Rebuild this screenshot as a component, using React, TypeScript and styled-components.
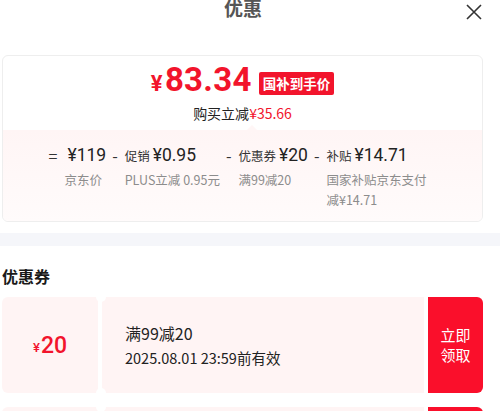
import React from "react";
import styled, { createGlobalStyle } from "styled-components";

const RED = "#f2142c";

const GlobalStyle = createGlobalStyle`
  body {
    margin: 0;
    background: #fff;
    font-family: "Noto Sans CJK SC", "Noto Sans", sans-serif;
    color: #1a1a1a;
  }
`;

const Page = styled.div`
  width: 500px;
  height: 411px;
  overflow: hidden;
`;

const Header = styled.div`
  position: relative;
  height: 55px;
  padding-right: 14px;
  display: flex;
  justify-content: center;
`;

const Title = styled.h2`
  margin: -2px 0 0;
  font-size: 19px;
  line-height: 20px;
  font-weight: 700;
  color: #555;
`;

const Close = styled.button`
  position: absolute;
  right: 17px;
  top: 3px;
  width: 18px;
  height: 18px;
  padding: 0;
  border: none;
  background: none;
`;

const PriceCard = styled.div`
  margin: 0 17px 0 2px;
  border: 1px solid #eeeeee;
  border-radius: 6px;
  overflow: hidden;
`;

const PriceTop = styled.div`
  position: relative;
  padding: 8px 0 7px;
  display: flex;
  flex-direction: column;
  align-items: center;
  &::after {
    content: "";
    position: absolute;
    left: 244px;
    bottom: 0;
    border: 5px solid transparent;
    border-bottom-color: #fff6f6;
  }
`;

const PriceLine = styled.div`
  display: flex;
  align-items: center;
  gap: 7px;
  height: 36px;
`;

const BigPrice = styled.div`
  color: ${RED};
  font-family: Roboto, "Noto Sans", sans-serif;
  font-weight: 700;
  font-size: 33px;
  line-height: 36px;
  letter-spacing: 0.3px;
  & > span {
    font-size: 22px;
    margin-right: 2px;
  }
`;

const Badge = styled.span`
  background: ${RED};
  color: #fff;
  font-size: 13.5px;
  font-weight: 700;
  line-height: 23px;
  padding: 0 4px;
  border-radius: 2px;
  margin-top: 2px;
`;

const Saving = styled.div`
  font-size: 14px;
  line-height: 20px;
  color: #222;
  margin-top: 3px;
  & > em {
    font-style: normal;
    color: ${RED};
  }
`;

const Breakdown = styled.div`
  background: linear-gradient(#fff5f5, #fffbfb);
  padding: 13px 0 11px;
  display: flex;
  justify-content: center;
  align-items: flex-start;
  gap: 6px;
  padding-right: 6px;
`;

const Col = styled.div<{ $w?: number }>`
  display: grid;
  grid-template-columns: auto auto;
  column-gap: 7px;
  align-items: start;
  ${({ $w }) => ($w ? `& > div:last-child { max-width: ${$w}px; }` : "")}
`;

const Op = styled.span`
  font-size: 16px;
  color: #333;
  line-height: 24px;
  height: 24px;
`;

const Main = styled.div`
  display: flex;
  align-items: baseline;
  height: 24px;
  font-size: 12.5px;
  color: #333;
  line-height: 24px;
  white-space: nowrap;
  & > b {
    font-family: Roboto, "Noto Sans", sans-serif;
    font-weight: 400;
    font-size: 17.5px;
    line-height: 24px;
    margin-left: 3px;
    color: #222;
  }
`;

const Desc = styled.div`
  grid-column: 2;
  font-size: 12.5px;
  line-height: 20px;
  color: #8c8c8c;
  margin-top: 3px;
`;

const GreyBand = styled.div`
  height: 13px;
  background: #f5f6fa;
  margin-top: 11px;
`;

const SectionTitle = styled.h3`
  margin: 19px 0 0 2px;
  font-size: 16px;
  line-height: 22px;
  font-weight: 700;
  color: #1a1a1a;
`;

const CouponList = styled.div`
  margin: 10px 17px 0 2px;
  display: flex;
  flex-direction: column;
  gap: 14px;
`;

const Coupon = styled.div`
  position: relative;
  display: flex;
  height: 96px;
  gap: 4px;
`;

const Stub = styled.div`
  width: 96px;
  background: #fff4f4;
  border-radius: 6px 0 0 6px;
  display: flex;
  align-items: center;
  justify-content: center;
  color: ${RED};
  font-family: Roboto, "Noto Sans", sans-serif;
  font-size: 23px;
  font-weight: 500;
  & > span {
    font-size: 13px;
    margin-right: 1px;
    margin-top: 5px;
  }
`;

const Notch = styled.span<{ $bottom?: boolean }>`
  position: absolute;
  left: 94px;
  ${({ $bottom }) => ($bottom ? "bottom: -5px;" : "top: -5px;")}
  width: 10px;
  height: 10px;
  border-radius: 50%;
  background: #fff;
`;

const Body = styled.div`
  flex: 1;
  background: #fff4f4;
  padding: 0 0 0 23px;
  display: flex;
  flex-direction: column;
  justify-content: center;
  color: #222;
`;

const Cond = styled.div`
  font-size: 16px;
  line-height: 24px;
`;

const Expire = styled.div`
  font-size: 14.5px;
  line-height: 24px;
  margin-top: 1px;
`;

const Claim = styled.button`
  width: 55px;
  border: none;
  background: #fa0f2b;
  color: #fff;
  border-radius: 0 6px 6px 0;
  font-family: "Noto Sans CJK SC", sans-serif;
  font-size: 15px;
  line-height: 20px;
  padding: 0 6px;
`;

type Part = { op: string; label?: string; amount: string; desc: string; w?: number };

const parts: Part[] = [
  { op: "=", amount: "¥119", desc: "京东价" },
  { op: "-", label: "促销", amount: "¥0.95", desc: "PLUS立减 0.95元" },
  { op: "-", label: "优惠券", amount: "¥20", desc: "满99减20" },
  { op: "-", label: "补贴", amount: "¥14.71", desc: "国家补贴京东支付减¥14.71", w: 104 },
];

const coupons = [
  { value: "20", cond: "满99减20", expire: "2025.08.01 23:59前有效" },
  { value: "20", cond: "满99减20", expire: "2025.08.01 23:59前有效" },
];

export default function App() {
  return (
    <Page>
      <GlobalStyle />
      <Header>
        <Title>优惠</Title>
        <Close aria-label="关闭">
          <svg width="18" height="18" viewBox="0 0 18 18" fill="none" stroke="#333" strokeWidth="1.6">
            <path d="M2 2 L16 16 M16 2 L2 16" />
          </svg>
        </Close>
      </Header>

      <PriceCard>
        <PriceTop>
          <PriceLine>
            <BigPrice>
              <span>¥</span>83.34
            </BigPrice>
            <Badge>国补到手价</Badge>
          </PriceLine>
          <Saving>
            购买立减<em>¥35.66</em>
          </Saving>
        </PriceTop>
        <Breakdown>
          {parts.map((p) => (
            <Col key={p.desc} $w={p.w}>
              <Op>{p.op}</Op>
              <Main>
                {p.label}
                <b>{p.amount}</b>
              </Main>
              <Desc>{p.desc}</Desc>
            </Col>
          ))}
        </Breakdown>
      </PriceCard>

      <GreyBand />
      <SectionTitle>优惠券</SectionTitle>

      <CouponList>
        {coupons.map((c, i) => (
          <Coupon key={i}>
            <Stub>
              <span>¥</span>
              {c.value}
            </Stub>
            <Notch />
            <Notch $bottom />
            <Body>
              <Cond>{c.cond}</Cond>
              <Expire>{c.expire}</Expire>
            </Body>
            <Claim>立即领取</Claim>
          </Coupon>
        ))}
      </CouponList>
    </Page>
  );
}
